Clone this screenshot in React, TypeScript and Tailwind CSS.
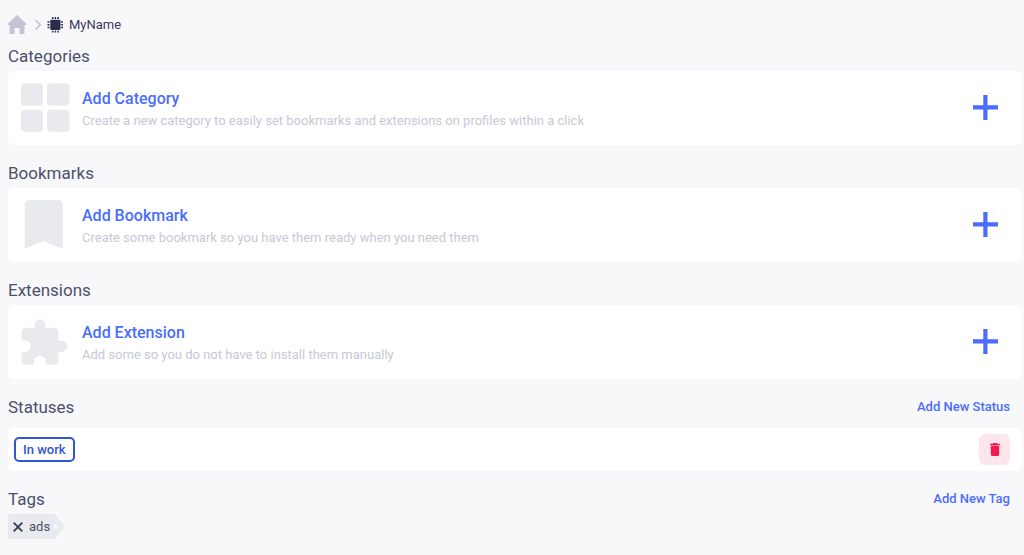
import React from 'react';

const CategoryIcon = () => (
  <svg viewBox="0 0 56 56" className="size-14 shrink-0 fill-[#e9eaee]" aria-hidden="true">
    <rect x="4" y="3.5" width="22" height="22" rx="3.5" />
    <rect x="30" y="3.5" width="22.5" height="22" rx="3.5" />
    <rect x="4" y="29.8" width="22" height="22" rx="3.5" />
    <rect x="30" y="29.8" width="22.5" height="22" rx="3.5" />
  </svg>
);

const BookmarkIcon = () => (
  <svg viewBox="0 0 56 56" className="size-14 shrink-0 fill-[#e9eaee]" aria-hidden="true">
    <path d="M7.700 52V8a5 5 0 0 1 5-5h28a5 5 0 0 1 5 5v44l-19-8z" />
  </svg>
);

const ExtensionIcon = () => (
  <svg viewBox="0 0 56 56" className="size-14 shrink-0 fill-[#e9eaee]" aria-hidden="true">
    <path
      transform="translate(0.2 3) scale(2.17)"
      d="M20.5 11H19V7c0-1.1-.9-2-2-2h-4V3.5C13 2.12 11.88 1 10.5 1S8 2.12 8 3.5V5H4c-1.1 0-1.99.9-1.99 2v3.8H3.5c1.49 0 2.7 1.21 2.7 2.7s-1.21 2.7-2.7 2.7H2V20c0 1.1.9 2 2 2h3.8v-1.5c0-1.49 1.21-2.7 2.7-2.7s2.7 1.21 2.7 2.7V22H17c1.1 0 2-.9 2-2v-4h1.5c1.38 0 2.5-1.12 2.5-2.5S21.88 11 20.5 11z"
    />
  </svg>
);

interface AddSectionProps {
  heading: string;
  title: string;
  description: string;
  Icon: React.FC;
}

const AddSection: React.FC<AddSectionProps> = ({ heading, title, description, Icon }) => (
  <section>
    <h2 className="mb-[3px] text-[17px] leading-6">{heading}</h2>
    <button
      type="button"
      className="flex w-full items-center gap-[9px] rounded-md bg-white py-[9px] pr-6 pl-[9px] text-left"
    >
      <Icon />
      <span className="flex min-w-0 flex-1 flex-col pt-0.5">
        <span className="text-base leading-6 font-medium text-[#4a6dff]">{title}</span>
        <span className="text-[13px] leading-5 text-[#c8c8d8]">{description}</span>
      </span>
      <svg viewBox="0 0 25 26" className="h-[26px] w-[25px] shrink-0 fill-[#4a6dff]" aria-hidden="true">
        <path d="M10.3 0h4.2v10.3H25v4.3H14.5V25h-4.2V14.6H0v-4.3h10.3z" />
      </svg>
    </button>
  </section>
);

const sections: AddSectionProps[] = [
  {
    heading: 'Categories',
    title: 'Add Category',
    description: 'Create a new category to easily set bookmarks and extensions on profiles within a click',
    Icon: CategoryIcon,
  },
  {
    heading: 'Bookmarks',
    title: 'Add Bookmark',
    description: 'Create some bookmark so you have them ready when you need them',
    Icon: BookmarkIcon,
  },
  {
    heading: 'Extensions',
    title: 'Add Extension',
    description: 'Add some so you do not have to install them manually',
    Icon: ExtensionIcon,
  },
];

const Breadcrumbs = () => (
  <nav aria-label="Breadcrumb" className="mb-[9px] flex h-5 items-center">
    <a href="#home" aria-label="Home" className="-ml-px">
      <svg viewBox="0 0 20 20" className="size-5 fill-[#c3c4d6]">
        <path d="M9.3.5a1 1 0 0 1 1.4 0l8.5 8.2c.6.6.3 1.3-.5 1.3h-1.2v7.8c0 .8-.5 1.2-1.2 1.2h-3.7v-5.3c0-.5-.3-.8-.8-.8H8.3c-.5 0-.8.3-.8.8V19H3.8c-.8 0-1.3-.4-1.3-1.2V10H1.3C.5 10 .2 9.300.8 8.700z" />
      </svg>
    </a>
    <svg viewBox="0 0 20 20" className="size-5 fill-none stroke-[#c3c4d6]" strokeWidth="1.6" aria-hidden="true">
      <path d="M8.500 5.300l4.900 4.500-4.900 4.500" />
    </svg>
    <a href="#profile" className="flex items-center gap-1.5 text-[13px] leading-5 text-[#363c58]">
      <svg viewBox="0 0 16 16" className="size-4 fill-[#272d4a]" aria-hidden="true">
        <rect x="3.300" y="2.700" width="10.200" height="10.200" rx="1" />
        <path d="M4.900 0h1.500v1.900H4.900zM7.650 0h1.500v1.900h-1.500zM10.400 0h1.500v1.900h-1.500zM4.900 13.700h1.500v1.900H4.900zM7.650 13.700h1.500v1.900h-1.500zM10.400 13.700h1.500v1.900h-1.500zM.5 4.300h2v1.500h-2zM.5 7.050h2v1.500h-2zM.5 9.800h2v1.500h-2zM14.200 4.300H16v1.500h-1.800zM14.200 7.050H16v1.500h-1.800zM14.200 9.800H16v1.500h-1.800z" />
      </svg>
      MyName
    </a>
  </nav>
);

const Statuses = () => (
  <section>
    <div className="mb-[9px] flex items-center justify-between pr-3">
      <h2 className="text-[17px] leading-6">Statuses</h2>
      <button type="button" className="text-[13px] leading-5 font-medium text-[#4a6dff]">Add New Status</button>
    </div>
    <div className="flex items-center justify-between rounded-md bg-white py-1.5 pr-3 pl-1.5">
      <span className="rounded-[5px] border-2 border-[#3156d3] px-[7px] text-[13px] leading-[21px] font-medium text-[#3156d3]">
        In work
      </span>
      <button
        type="button"
        aria-label="Delete status"
        className="flex size-[31px] items-center justify-center rounded-md bg-[#fde7ed]"
      >
        <svg viewBox="0 0 10 13" className="h-[13px] w-2.5 fill-[#f01c50]">
          <path d="M3 0h4l.6.7H10V2H0V.7h2.400zM.8 3h8.400v8.600c0 .8-.6 1.400-1.400 1.400H2.200c-.8 0-1.400-.6-1.400-1.400z" />
          <path d="M.8 2h8.400v1H.8z" fillOpacity="0.5" />
        </svg>
      </button>
    </div>
  </section>
);

const Tags = () => (
  <section>
    <div className="mb-[3px] flex items-center justify-between pr-3">
      <h2 className="text-[17px] leading-6">Tags</h2>
      <button type="button" className="text-[13px] leading-5 font-medium text-[#4a6dff]">Add New Tag</button>
    </div>
    <div className="flex">
      <div className="flex h-[25px] items-center gap-1.5 rounded-l-[3px] bg-[#e9eaee] pl-[5px] text-[13px] leading-5">
        <button type="button" aria-label="Remove tag ads">
          <svg viewBox="0 0 10 10" className="size-2.5 fill-none stroke-[#363c58]" strokeWidth="1.8">
            <path d="M.7.7l8.600 8.600M9.300.7L.7 9.300" />
          </svg>
        </button>
        ads
      </div>
      <svg viewBox="0 0 15 25" className="h-[25px] w-[15px]" aria-hidden="true">
        <path className="fill-[#e9eaee]" d="M0 0h3q1.500 0 2.500 1l8.200 9.500q1.600 2 0 4L5.500 24q-1 1-2.500 1H0z" />
        <circle className="fill-[#f8f8fb]" cx="5.500" cy="12.500" r="2.200" />
      </svg>
    </div>
  </section>
);

export default function App() {
  return (
    <main className="min-h-screen bg-[#f8f8fb] pt-[15px] pr-0.5 pb-4 pl-2 font-[Roboto,sans-serif] text-[#4b506b]">
      <Breadcrumbs />
      <div className="flex flex-col gap-4">
        {sections.map((section) => (
          <AddSection key={section.heading} {...section} />
        ))}
        <Statuses />
        <Tags />
      </div>
    </main>
  );
}
